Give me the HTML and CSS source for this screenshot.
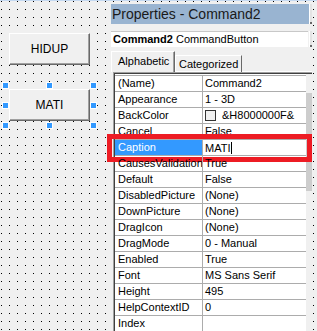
FILE: index.html
```html
<!DOCTYPE html>
<html lang="id">
<head>
  <meta charset="UTF-8" />
  <title>Form1 - Properties</title>
  <link rel="stylesheet" href="styles.css">
</head>
<body>

  <div class="form">
    <button class="cmd">HIDUP</button>
    <div class="selected">
      <button class="cmd">MATI</button>
      <span class="handle h-tl"></span>
      <span class="handle h-tc"></span>
      <span class="handle h-tr"></span>
      <span class="handle h-ml"></span>
      <span class="handle h-mr"></span>
      <span class="handle h-bl"></span>
      <span class="handle h-bc"></span>
      <span class="handle h-br"></span>
    </div>
  </div>

  <div class="props">
    <div class="bar-row">
      <div class="titlebar">Properties - Command2</div>
      <span class="stub"></span>
    </div>

    <div class="bar-row object-row">
      <div class="object-box"><b>Command2</b> CommandButton</div>
      <span class="stub"></span>
    </div>

    <div class="tabs">
      <span class="tab active">Alphabetic</span>
      <span class="tab">Categorized</span>
    </div>

    <div class="grid">
      <div class="rows">
        <div class="row"><span class="name">(Name)</span><span class="value">Command2</span></div>
        <div class="row"><span class="name">Appearance</span><span class="value">1 - 3D</span></div>
        <div class="row"><span class="name">BackColor</span><span class="value"><i class="swatch"></i>&amp;H8000000F&amp;</span></div>
        <div class="row"><span class="name">Cancel</span><span class="value">False</span></div>
        <div class="row editing"><span class="name">Caption</span><span class="value"><span class="cursor">MATI</span></span></div>
        <div class="row"><span class="name">CausesValidation</span><span class="value">True</span></div>
        <div class="row"><span class="name">Default</span><span class="value">False</span></div>
        <div class="row"><span class="name">DisabledPicture</span><span class="value">(None)</span></div>
        <div class="row"><span class="name">DownPicture</span><span class="value">(None)</span></div>
        <div class="row"><span class="name">DragIcon</span><span class="value">(None)</span></div>
        <div class="row"><span class="name">DragMode</span><span class="value">0 - Manual</span></div>
        <div class="row"><span class="name">Enabled</span><span class="value">True</span></div>
        <div class="row"><span class="name">Font</span><span class="value">MS Sans Serif</span></div>
        <div class="row"><span class="name">Height</span><span class="value">495</span></div>
        <div class="row"><span class="name">HelpContextID</span><span class="value">0</span></div>
        <div class="row"><span class="name">Index</span><span class="value"></span></div>
      </div>
      <div class="scrollbar"><div class="thumb"></div></div>
    </div>
  </div>

</body>
</html>
```

FILE: styles.css
```css
body {
  margin: 0;
  height: 331px;
  overflow: hidden;
  display: flex;
  align-items: flex-start;
  font-family: "Liberation Sans", Arial, sans-serif;
  font-size: 11px;
  color: #000;
  background-color: #f0f0f0;
  background-image: conic-gradient(from 270deg at 1px 1px, #000 90deg, transparent 0);
  background-size: 8px 8px;
  background-position: 1px 1px;
  box-shadow: inset 0 1px #c5d9f1;
}

/* Form designer */
.form {
  width: 108px;
  flex: none;
  padding: 33px 0 0 9px;
  box-sizing: border-box;
  display: flex;
  flex-direction: column;
  gap: 24px;
}

.cmd {
  width: 81px;
  height: 32px;
  margin: 0;
  padding: 0;
  box-sizing: border-box;
  background: #f0f0f0;
  border: 1px solid;
  border-color: #fff #696969 #696969 #fff;
  box-shadow: inset -1px -1px #a0a0a0;
  font-family: "Liberation Sans", Arial, sans-serif;
  font-size: 12px;
  color: #000;
  display: block;
}

.selected {
  position: relative;
  width: 81px;
  height: 32px;
}

.handle {
  position: absolute;
  width: 5px;
  height: 5px;
  background: #3399ff;
  border: 1px solid #fff;
}

.h-tl { left: -7px; top: -7px; }
.h-tc { left: 37px; top: -7px; }
.h-tr { left: 81px; top: -7px; }
.h-ml { left: -7px; top: 13px; }
.h-mr { left: 81px; top: 13px; }
.h-bl { left: -7px; top: 33px; }
.h-bc { left: 37px; top: 33px; }
.h-br { left: 81px; top: 33px; }

/* Properties window */
.props {
  width: 204px;
  flex: none;
  margin-top: 4px;
  padding-left: 3px;
  box-sizing: border-box;
  background: #f0f0f0;
  height: 327px;
}

.bar-row {
  display: flex;
  gap: 0;
}

.titlebar {
  flex: 1;
  height: 20px;
  line-height: 20px;
  background: #99b4d1;
  color: #1a1a1a;
  font-size: 14px;
  padding-left: 1px;
  white-space: nowrap;
}

.stub {
  width: 3px;
  flex: none;
  background: #e3e3e3;
  border-left: 1px solid #fff;
  box-sizing: border-box;
  box-shadow: inset 0 -2px #696969;
}

.object-row {
  margin-top: 7px;
  gap: 1px;
}

.object-box {
  flex: 1;
  height: 16px;
  line-height: 15px;
  background: #fff;
  box-sizing: border-box;
  border-top: 1px solid #c8c8c8;
  padding-left: 2px;
  white-space: nowrap;
}

.object-box b {
  font-weight: bold;
}

.tabs {
  display: flex;
  align-items: flex-end;
  margin-top: 4px;
  height: 20px;
  border-bottom: 1px solid #fff;
}

.tab {
  height: 17px;
  line-height: 17px;
  box-sizing: border-box;
  border: 1px solid;
  border-color: #fff #696969 transparent #fff;
  border-bottom: 0;
  padding: 0 5px 0 3px;
  margin-bottom: -1px;
  width: 67px;
  white-space: nowrap;
}

.tab.active {
  width: 64px;
  height: 21px;
  line-height: 19px;
  padding-left: 6px;
  background: #f0f0f0;
  box-shadow: inset -1px 0 #a0a0a0;
}

.grid {
  display: flex;
  margin-left: 2px;
  border-top: 1px solid #a0a0a0;
  border-left: 1px solid #a0a0a0;
}

.rows {
  flex: 1;
  background: #fff;
  border-top: 1px solid #404040;
  border-left: 1px solid #404040;
  padding-top: 1px;
}

.row {
  position: relative;
  display: flex;
  height: 16px;
  line-height: 15px;
  box-sizing: border-box;
  border-bottom: 1px solid #acacac;
  white-space: nowrap;
}

.row:first-child {
  border-top: 1px solid #acacac;
  height: 17px;
}

.name {
  width: 88px;
  flex: none;
  box-sizing: border-box;
  border-right: 1px solid #acacac;
  padding-left: 3px;
  overflow: hidden;
}

.value {
  flex: 1;
  padding-left: 2px;
  display: flex;
  align-items: center;
}

.swatch {
  width: 11px;
  height: 11px;
  box-sizing: border-box;
  border: 1px solid #333;
  background: #f0f0f0;
  margin: 0 6px 0 0;
}

.editing .name {
  background: #3399ff;
  color: #fff;
}

.cursor {
  border-right: 1px solid #000;
  padding-right: 1px;
  line-height: 12px;
}

/* kotak merah penanda */
.editing::after {
  content: "";
  position: absolute;
  top: -6px;
  left: -8px;
  right: -6px;
  bottom: -7px;
  border: 5px solid #ed1c24;
}

.scrollbar {
  width: 6px;
  flex: none;
  background: #f0f0f0;
  border-top: 1px solid #404040;
}

.thumb {
  margin-top: 19px;
  height: 98px;
  background: #cdcdcd;
}
```
